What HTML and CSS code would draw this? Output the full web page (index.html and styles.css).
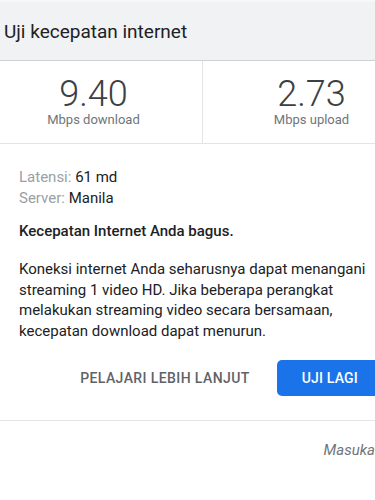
FILE: index.html
```html
<!DOCTYPE html>
<html lang="id">
<head>
<meta charset="utf-8">
<link rel="stylesheet" href="styles.css">
</head>
<body>
<div class="page">
  <header class="header">
    <h1 class="title">Uji kecepatan internet</h1>
  </header>
  <section class="metrics">
    <div class="metric metric-left">
      <div class="value">9.40</div>
      <div class="unit">Mbps download</div>
    </div>
    <div class="metric metric-right">
      <div class="value">2.73</div>
      <div class="unit">Mbps upload</div>
    </div>
  </section>
  <section class="details">
    <div class="row"><span class="label">Latensi:</span> 61 md</div>
    <div class="row"><span class="label">Server:</span> Manila</div>
    <p class="verdict">Kecepatan Internet Anda bagus.</p>
    <p class="desc">Koneksi internet Anda seharusnya dapat menangani streaming 1 video HD. Jika beberapa perangkat melakukan streaming video secara bersamaan, kecepatan download dapat menurun.</p>
    <div class="actions">
      <button class="btn btn-text">PELAJARI LEBIH LANJUT</button>
      <button class="btn btn-primary">UJI LAGI</button>
    </div>
  </section>
  <footer class="footer">
    <span class="feedback">Masukan</span>
  </footer>
</div>
</body>
</html>
```

FILE: styles.css
```css
html, body {
  margin: 0;
  padding: 0;
  background: #ffffff;
}
body {
  font-family: Roboto, "Noto Sans", Arial, sans-serif;
  color: #202124;
  width: 375px;
  height: 500px;
  overflow: hidden;
}
.page {
  width: 375px;
  overflow: hidden;
}
.header {
  height: 58px;
  background: #f1f2f4;
  border-top: 2px solid #f7f7f8;
  border-bottom: 1px solid #d0d1d3;
  display: flex;
  align-items: center;
  padding-left: 4px;
}
.title {
  margin: 0;
  font-size: 19px;
  font-weight: 400;
  color: #202124;
  line-height: 24px;
  padding-top: 2px;
}
.metrics {
  display: grid;
  grid-template-columns: 203px 1fr;
  border-bottom: 1px solid #e4e4e6;
}
.metric {
  display: flex;
  flex-direction: column;
  align-items: center;
  padding-top: 15px;
  padding-bottom: 16px;
}
.metric-left {
  border-right: 1px solid #e4e4e6;
  padding-right: 15px;
}
.metric-right {
  padding-left: 45px;
}
.value {
  font-size: 36px;
  font-weight: 300;
  line-height: 36px;
  color: #3c4043;
}
.unit {
  font-size: 13px;
  line-height: 15px;
  color: #70757a;
}
.details {
  padding: 23px 0 24px 19px;
  font-size: 15px;
  line-height: 21px;
  border-bottom: 1px solid #e4e4e6;
}
.row {
  color: #202124;
}
.label {
  color: #9aa0a6;
}
.verdict {
  margin: 12px 0 0;
  font-weight: 500;
  color: #202124;
}
.desc {
  margin: 17px 0 0;
  line-height: 20.6px;
  color: #202124;
}
.actions {
  display: flex;
  justify-content: flex-end;
  align-items: center;
  gap: 27px;
  margin-top: 19px;
  margin-right: -8px;
}
.btn {
  font-family: Roboto, "Noto Sans", Arial, sans-serif;
  font-size: 14px;
  font-weight: 500;
  letter-spacing: 0.2px;
  border: none;
  background: none;
  height: 36px;
  padding: 0;
  cursor: pointer;
}
.btn-text {
  color: #5f6368;
  letter-spacing: 0.4px;
}
.btn-primary {
  background: #1a73e8;
  color: #ffffff;
  border-radius: 5px;
  padding: 0 25px;
}
.footer {
  display: flex;
  justify-content: flex-end;
  padding-top: 19px;
  margin-right: -8px;
}
.feedback {
  font-size: 15px;
  font-style: italic;
  color: #70757a;
  line-height: 21px;
}
```
